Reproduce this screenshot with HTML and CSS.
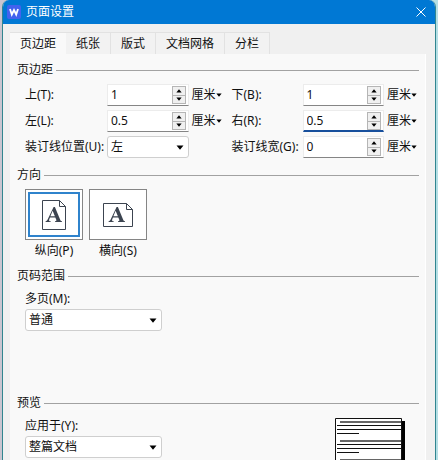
FILE: index.html
```html
<!DOCTYPE html>
<html lang="zh-CN">
<head>
<meta charset="utf-8">
<title>页面设置</title>
<link rel="stylesheet" href="styles.css">
</head>
<body>
<svg class="defs" aria-hidden="true">
  <symbol id="down" viewBox="0 0 8 5"><path d="M0.5 0.5h7L4 4.7z"/></symbol>
  <symbol id="up" viewBox="0 0 8 5"><path d="M0.5 4.5h7L4 0.3z"/></symbol>
</svg>
<main class="dialog">
  <header class="titlebar">
    <svg class="logo" viewBox="0 0 14 14" aria-hidden="true">
      <rect width="14" height="14" rx="2" fill="#4262ee"/>
      <path d="M3 4l1.800 5.500L7 5l2.200 4.500L11 4" fill="none" stroke="#fff" stroke-width="1.800"/>
    </svg>
    <h1 class="title">页面设置</h1>
    <button class="close" type="button" aria-label="关闭">
      <svg viewBox="0 0 10 10" aria-hidden="true"><path d="M0.5 0.5l9 9M9.5 0.5l-9 9"/></svg>
    </button>
  </header>
  <div class="body">
    <nav class="tabs" role="tablist">
      <button class="tab tab-active" type="button" role="tab" aria-selected="true">页边距</button>
      <button class="tab" type="button" role="tab">纸张</button>
      <button class="tab" type="button" role="tab">版式</button>
      <button class="tab" type="button" role="tab">文档网格</button>
      <button class="tab" type="button" role="tab">分栏</button>
    </nav>
    <form class="panel">
      <section class="group">
        <h2 class="heading">页边距</h2>
        <div class="fields">
          <label for="top">上(T):</label>
          <div class="spin"><input id="top" type="text" value="1"><span class="steps"><button type="button" aria-label="增加"><svg><use href="#up"/></svg></button><button type="button" aria-label="减少"><svg><use href="#down"/></svg></button></span></div>
          <button class="unit" type="button">厘米<svg><use href="#down"/></svg></button>
          <label for="bottom">下(B):</label>
          <div class="spin"><input id="bottom" type="text" value="1"><span class="steps"><button type="button" aria-label="增加"><svg><use href="#up"/></svg></button><button type="button" aria-label="减少"><svg><use href="#down"/></svg></button></span></div>
          <button class="unit" type="button">厘米<svg><use href="#down"/></svg></button>

          <label for="left">左(L):</label>
          <div class="spin"><input id="left" type="text" value="0.5"><span class="steps"><button type="button" aria-label="增加"><svg><use href="#up"/></svg></button><button type="button" aria-label="减少"><svg><use href="#down"/></svg></button></span></div>
          <button class="unit" type="button">厘米<svg><use href="#down"/></svg></button>
          <label for="right">右(R):</label>
          <div class="spin spin-active"><input id="right" type="text" value="0.5"><span class="steps"><button type="button" aria-label="增加"><svg><use href="#up"/></svg></button><button type="button" aria-label="减少"><svg><use href="#down"/></svg></button></span></div>
          <button class="unit" type="button">厘米<svg><use href="#down"/></svg></button>

          <label for="gutter-pos">装订线位置(U):</label>
          <div class="drop"><select id="gutter-pos"><option>左</option><option>上</option></select><svg><use href="#down"/></svg></div>
          <span></span>
          <label for="gutter">装订线宽(G):</label>
          <div class="spin"><input id="gutter" type="text" value="0"><span class="steps"><button type="button" aria-label="增加"><svg><use href="#up"/></svg></button><button type="button" aria-label="减少"><svg><use href="#down"/></svg></button></span></div>
          <button class="unit" type="button">厘米<svg><use href="#down"/></svg></button>
        </div>
      </section>

      <section class="group">
        <h2 class="heading">方向</h2>
        <div class="choices">
          <button class="choice" type="button" aria-pressed="true">
            <span class="thumb thumb-on">
              <svg class="portrait" viewBox="0 0 24 30" aria-hidden="true">
                <path class="sheet" d="M0.5 0.5h17l6 6v23h-23zM17.5 0.5v6h6"/>
                <path class="mark" d="M11.6 7h1.3l5.5 13.2q.4.9 1.6 1v.8h-7v-.8q1.9 0 1.3-1.5l-1-2.3H8l-.8 2q-.7 1.8 1.5 1.8v.8H3.600v-.8q1.300-.1 1.900-1.500zM10.600 10.800L8.400 16.300h4.500z"/>
              </svg>
            </span>
            纵向(P)
          </button>
          <button class="choice" type="button" aria-pressed="false">
            <span class="thumb">
              <svg class="landscape" viewBox="0 0 30 24" aria-hidden="true">
                <path class="sheet" d="M0.5 0.5h23l6 6v17h-29zM23.5 0.5v6h6"/>
                <path class="mark" transform="translate(2 -3)" d="M11.6 7h1.3l5.5 13.2q.4.9 1.6 1v.8h-7v-.8q1.9 0 1.3-1.5l-1-2.3H8l-.8 2q-.7 1.8 1.5 1.8v.8H3.600v-.8q1.300-.1 1.900-1.500zM10.600 10.800L8.400 16.300h4.500z"/>
              </svg>
            </span>
            横向(S)
          </button>
        </div>
      </section>

      <section class="group group-range">
        <h2 class="heading">页码范围</h2>
        <div class="stack">
          <label for="multi">多页(M):</label>
          <div class="drop"><select id="multi"><option>普通</option></select><svg><use href="#down"/></svg></div>
        </div>
      </section>

      <section class="group group-last">
        <h2 class="heading">预览</h2>
        <div class="preview-row">
          <div class="stack">
            <label for="apply">应用于(Y):</label>
            <div class="drop"><select id="apply"><option>整篇文档</option></select><svg><use href="#down"/></svg></div>
          </div>
          <svg class="preview" viewBox="0 0 70 42" aria-hidden="true">
            <path d="M67 3h3v39h-3z"/>
            <path d="M0.500 42v-41.500h66V42" fill="#fff" stroke="#111"/>
            <path d="M5 4h61M5 23h61M5 42h61" stroke="#666" stroke-width="2"/>
            <path d="M2 7.500h64M2 11.500h64M2 15.500h22M2 26.500h64M2 30.500h64M2 34.500h22" stroke="#111"/>
          </svg>
        </div>
      </section>
    </form>
  </div>
</main>
</body>
</html>
```
FILE: styles.css
```css
* { box-sizing: border-box; }

body {
  margin: 0;
  padding: 0 2px;
  background: linear-gradient(90deg, #c9c5d0 50%, #b5dfe5 50%);
  color: #111;
  font: 12px/16px "Noto Sans", "Noto Sans CJK SC", sans-serif;
}

button, input, select { margin: 0; font: inherit; color: inherit; }
button { padding: 0; border: 0; background: none; }
.defs { position: absolute; width: 0; height: 0; }

.dialog {
  display: flex;
  flex-direction: column;
  min-height: 100vh;
  border: 1px solid #31858f;
  border-width: 0 1px;
  border-radius: 7px 7px 0 0;
  overflow: hidden;
  background: #f0f0f0;
}

.titlebar {
  display: flex;
  align-items: center;
  height: 24px;
  padding: 0 9px 0 4px;
  background: #0078d4;
  color: #fff;
}
.logo { width: 14px; height: 14px; }
.title { flex: 1; margin: 0 0 0 5px; font-size: 12px; font-weight: 400; }
.close { display: flex; }
.close svg { width: 10px; height: 10px; fill: none; stroke: #fff; }

.body {
  display: flex;
  flex: 1;
  flex-direction: column;
  padding: 8px 9px 0 7px;
}

.tabs { display: flex; height: 22px; }
.tab {
  padding: 0 10px;
  border: 1px solid #e2e2e2;
  border-width: 1px 1px 0 0;
  background: #f2f2f2;
}
.tab-active { background: #f9f9f9; border-right-width: 0; }

.panel {
  flex: 1;
  padding: 8px 6px 0 7px;
  border-right: 1px solid #fff;
  background: #f9f9f9;
}
.group { margin-bottom: 9px; }
.group-range { min-height: 118px; }
.group-last { margin-bottom: 0; }
.heading {
  display: flex;
  align-items: center;
  gap: 3px;
  margin: 0 0 6px;
  font-size: 12px;
  font-weight: 400;
}
.heading::after { content: ""; flex: 1; height: 1px; background: #a2a2a2; }

.fields {
  display: grid;
  grid-template-columns: 82px 1fr 43px 71px 1fr 35px;
  grid-auto-rows: 22px;
  row-gap: 4px;
  align-items: center;
  padding-left: 8px;
  white-space: nowrap;
}

.spin {
  display: flex;
  height: 22px;
  padding: 1px 2px 1px 0;
  border: 1px solid #ececec;
  border-bottom-color: #858585;
  background: #fff;
}
.spin-active { border-bottom: 2px solid #174f9c; padding-bottom: 0; }
.spin input {
  flex: 1;
  width: 0;
  padding: 0 0 0 3px;
  border: 0;
  outline: 0;
  background: none;
}
.steps { display: flex; flex-direction: column; width: 14px; border: 1px solid #b5b5b5; }
.steps button {
  display: flex;
  flex: 1;
  align-items: center;
  justify-content: center;
  background: #f0f0f0;
}
.steps button + button { border-top: 1px solid #b5b5b5; }
.steps svg { width: 6px; height: 4px; }

.unit { display: flex; align-items: center; padding-left: 3px; }
.unit svg { width: 6px; height: 4px; }

.drop { display: grid; align-items: center; }
.drop select, .drop svg { grid-area: 1 / 1; }
.drop select {
  width: 100%;
  height: 22px;
  padding: 0 20px 0 3px;
  border: 1px solid #cfcfcf;
  border-radius: 3px;
  appearance: none;
  background: #fff;
}
.drop svg {
  width: 8px;
  height: 5px;
  margin-right: 5px;
  justify-self: end;
  pointer-events: none;
}

.choices { display: flex; gap: 6px; padding-left: 8px; }
.choice { display: flex; flex-direction: column; gap: 3px; align-items: center; }
.thumb {
  display: flex;
  align-items: center;
  justify-content: center;
  width: 58px;
  height: 51px;
  border: 1px solid #858585;
  background: #fff;
}
.thumb-on { outline: 2px solid #2f83cc; outline-offset: -5px; }
.portrait { width: 24px; height: 30px; }
.landscape { width: 30px; height: 24px; }
.sheet { fill: none; stroke: #3c4450; }
.mark { fill: #3c4450; fill-rule: evenodd; }

.stack { width: 145px; padding-left: 8px; }
.stack label { display: block; margin-bottom: 1px; line-height: 18px; }
.preview-row {
  display: flex;
  align-items: flex-start;
  justify-content: space-between;
  padding-right: 14px;
}
.preview { width: 70px; height: 42px; margin-top: 1px; }
```
